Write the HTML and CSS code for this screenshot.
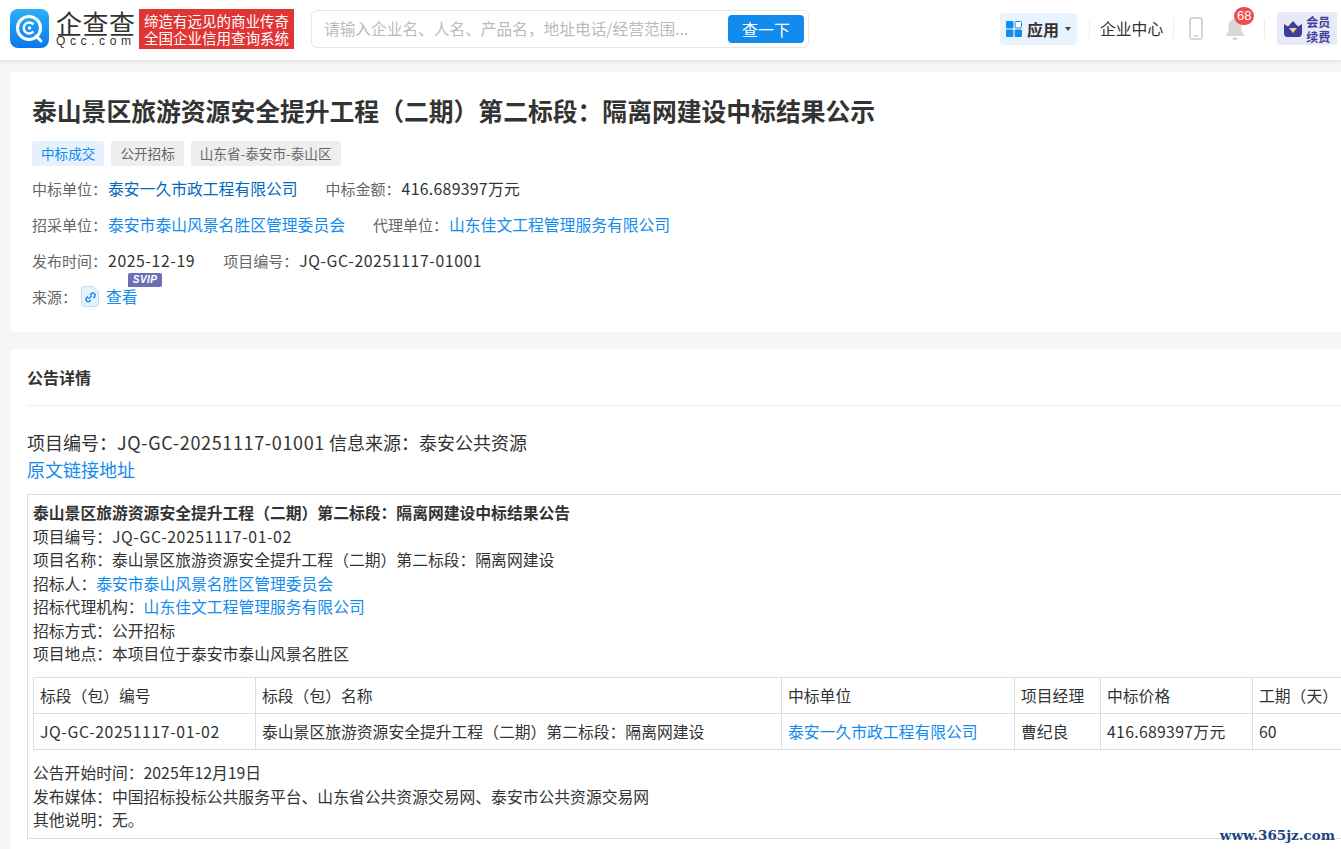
FILE: index.html
```html
<!DOCTYPE html>
<html lang="zh-CN">
<head>
<meta charset="utf-8">
<title>泰山景区旅游资源安全提升工程&#xFF08;二期&#xFF09;第二标段&#xFF1A;隔离网建设中标结果公示</title>
<link rel="stylesheet" href="styles.css">
</head>
<body>
<header class="topbar">
  <svg class="logo-mark" width="39" height="39" viewBox="0 0 39 39">
    <defs><linearGradient id="lg" x1="0" y1="0" x2="0" y2="1"><stop offset="0" stop-color="#2bb0f5"/><stop offset="1" stop-color="#0a78f0"/></linearGradient></defs>
    <rect width="39" height="39" rx="8" fill="url(#lg)"/>
    <circle cx="19" cy="19" r="11.5" fill="none" stroke="#fff" stroke-width="3"/>
    <path d="M23.5 15.5a5.5 5.5 0 1 0 0 7" fill="none" stroke="#fff" stroke-width="2.4"/>
    <circle cx="19.5" cy="19" r="1.8" fill="#fff"/>
    <path d="M26 27l5 5" stroke="#fff" stroke-width="3" stroke-linecap="round"/>
  </svg>
  <div class="logo-text">
    <div class="logo-cn">企查查</div>
    <div class="logo-en">Qcc.com</div>
  </div>
  <div class="slogan">缔造有远见的商业传奇<br>全国企业信用查询系统</div>
  <div class="search">
    <span class="search-hint">请输入企业名、人名、产品名&#xFF0C;地址电话/经营范围...</span>
    <span class="search-btn">查一下</span>
  </div>
  <nav class="topnav">
    <div class="apps">
      <svg width="16" height="16" viewBox="0 0 16 16"><rect width="7.4" height="7.4" rx="1" fill="#128bed"/><rect x="9.1" y=".5" width="6.4" height="6.4" rx="1" fill="#fff" stroke="#128bed"/><rect y="8.6" width="7.4" height="7.4" rx="1" fill="#128bed"/><rect x="8.6" y="8.6" width="7.4" height="7.4" rx="1" fill="#128bed"/></svg>
      <span class="apps-label">应用</span>
      <span class="caret"></span>
    </div>
    <span class="nav-sep sep-first"></span>
    <span class="nav-link">企业中心</span>
    <span class="nav-sep"></span>
    <svg class="phone" width="14" height="23" viewBox="0 0 14 23"><rect x="1" y="1" width="12" height="21" rx="2.5" fill="none" stroke="#d6d6d6" stroke-width="2"/><rect x="4.5" y="18" width="5" height="1.6" fill="#d6d6d6"/></svg>
    <div class="bell">
      <svg width="20" height="24" viewBox="0 0 20 24"><path d="M10 2c-4 0-6.500 3-6.500 7v5L1 18v1h18v-1l-2.500-4V9c0-4-2.500-7-6.500-7z" fill="#d8d8d8"/><rect x="7.5" y="20.5" width="5" height="2.5" rx="1.2" fill="#d8d8d8"/></svg>
      <span class="badge">68</span>
    </div>
    <span class="nav-sep sep-last"></span>
    <div class="vip">
      <svg width="18" height="16" viewBox="0 0 18 16"><path d="M0 3l4 2.500L9 0l5 5.500L18 3v9c0 2-1 4-3 4H3c-2 0-3-2-3-4z" fill="#3f3f99"/><path d="M5 7h8l-4 5z" fill="#f3cf8f"/></svg>
      <span class="vip-text">会员<br>续费</span>
    </div>
  </nav>
</header>

<main class="page">
  <section class="card summary">
    <h1 class="title">泰山景区旅游资源安全提升工程&#xFF08;二期&#xFF09;第二标段&#xFF1A;隔离网建设中标结果公示</h1>
    <div class="tags">
      <span class="tag tag-blue">中标成交</span>
      <span class="tag">公开招标</span>
      <span class="tag">山东省-泰安市-泰山区</span>
    </div>
    <div class="meta"><span class="lbl">中标单位&#xFF1A;</span><a class="deep">泰安一久市政工程有限公司</a><span class="lbl gap">中标金额&#xFF1A;</span><span class="val amount">416.689397万元</span></div>
    <div class="meta"><span class="lbl">招采单位&#xFF1A;</span><a>泰安市泰山风景名胜区管理委员会</a><span class="lbl gap">代理单位&#xFF1A;</span><a>山东佳文工程管理服务有限公司</a></div>
    <div class="meta"><span class="lbl">发布时间&#xFF1A;</span><span class="val code">2025-12-19</span><span class="lbl gap">项目编号&#xFF1A;</span><span class="val code">JQ-GC-20251117-01001</span></div>
    <div class="meta source">
      <span class="lbl">来源&#xFF1A;</span>
      <svg class="file" width="18" height="21" viewBox="0 0 18 21"><path d="M2.500.5H12L17.500 6v12a2.500 2.500 0 0 1-2.500 2.500H2.500A2 2 0 0 1 .5 18.500v-16a2 2 0 0 1 2-2z" fill="#e6f3fd" stroke="#bcdcf7"/><path d="M7.500 13l3.500-3.500M7 10.500L5.500 12a2.300 2.300 0 0 0 3.200 3.200L10 14M9 9L10.500 7.500a2.300 2.300 0 0 1 3.200 3.200L12.200 12" fill="none" stroke="#128bed" stroke-width="1.500"/></svg>
      <a class="view">查看<span class="svip">SVIP</span></a>
    </div>
  </section>

  <section class="card detail">
    <h2 class="detail-head">公告详情</h2>
    <div class="detail-body">
      <p class="lead">项目编号&#xFF1A;<span class="lead-code">JQ-GC-20251117-01001</span> 信息来源&#xFF1A;泰安公共资源<br><a>原文链接地址</a></p>
      <div class="notice">
        <strong>泰山景区旅游资源安全提升工程&#xFF08;二期&#xFF09;第二标段&#xFF1A;隔离网建设中标结果公告</strong><br>
        项目编号&#xFF1A;<span class="code">JQ-GC-20251117-01-02</span><br>
        项目名称&#xFF1A;泰山景区旅游资源安全提升工程&#xFF08;二期&#xFF09;第二标段&#xFF1A;隔离网建设<br>
        招标人&#xFF1A;<a>泰安市泰山风景名胜区管理委员会</a><br>
        招标代理机构&#xFF1A;<a>山东佳文工程管理服务有限公司</a><br>
        招标方式&#xFF1A;公开招标<br>
        项目地点&#xFF1A;本项目位于泰安市泰山风景名胜区
        <table class="bids">
          <colgroup><col class="c1"><col class="c2"><col class="c3"><col class="c4"><col class="c5"><col class="c6"></colgroup>
          <tr><td>标段&#xFF08;包&#xFF09;编号</td><td>标段&#xFF08;包&#xFF09;名称</td><td>中标单位</td><td>项目经理</td><td>中标价格</td><td>工期&#xFF08;天&#xFF09;</td></tr>
          <tr><td class="code">JQ-GC-20251117-01-02</td><td>泰山景区旅游资源安全提升工程&#xFF08;二期&#xFF09;第二标段&#xFF1A;隔离网建设</td><td><a>泰安一久市政工程有限公司</a></td><td>曹纪良</td><td class="amount">416.689397万元</td><td>60</td></tr>
        </table>
        公告开始时间&#xFF1A;2025年12月19日<br>
        发布媒体&#xFF1A;中国招标投标公共服务平台、山东省公共资源交易网、泰安市公共资源交易网<br>
        其他说明&#xFF1A;无。
      </div>
    </div>
  </section>
</main>
<div class="watermark">www.365jz.com</div>
</body>
</html>
```

FILE: styles.css
```css
* { box-sizing: border-box; }
html, body { margin: 0; padding: 0; height: 849px; overflow: hidden; }
body {
  position: relative;
  width: 1341px;
  background: #f6f6f6;
  color: #333;
  font-family: "Noto Sans CJK SC", "Open Sans", sans-serif;
  font-size: 14px;
}
a { color: #128bed; text-decoration: none; }
.code { letter-spacing: .6px; }
.amount { letter-spacing: .3px; }

.topbar {
  display: flex;
  align-items: center;
  height: 60px;
  padding-left: 10px;
  background: #fff;
  box-shadow: 0 1px 4px rgba(0,0,0,.12);
}
.logo-mark { flex: none; margin-top: -3px; }
.logo-text { width: 79px; margin-left: 7px; margin-top: -3px; }
.logo-cn {
  font-size: 26px; line-height: 25px; letter-spacing: .5px; color: #333; white-space: nowrap;
}
.logo-en {
  font-family: "Liberation Sans", sans-serif;
  font-size: 12px; line-height: 12px; letter-spacing: 4.6px; color: #333; white-space: nowrap;
  margin-top: 0;
}
.slogan {
  width: 155px; height: 40px; margin-left: 4px;
  margin-top: -3px;
  background: #e03535; color: #fff;
  font-size: 14.5px; line-height: 17px; text-align: center; white-space: nowrap;
  padding-top: 3px;
}
.search {
  display: flex; align-items: center; justify-content: space-between;
  width: 498px; height: 38px; margin-left: 17px; margin-top: -3px;
  padding: 0 4px 0 12px;
  border: 1px solid #e6e6e6; border-radius: 6px; background: #fff;
}
.search-hint { font-size: 15.7px; color: #bbb; white-space: nowrap; }
.search-btn {
  flex: none;
  width: 76px; height: 28px; border-radius: 4px;
  background: #128bed; color: #fff; font-size: 16px; line-height: 28px; text-align: center;
}
.topnav { display: flex; align-items: center; margin-left: 191px; margin-top: -3px; }
.apps {
  display: flex; align-items: center;
  width: 77px; height: 32px; padding-left: 6px;
  border-radius: 4px; background: #e9f3fd;
}
.apps-label { margin-left: 5px; font-size: 16px; font-weight: 700; color: #333; }
.caret {
  margin-left: 6px; border-left: 3.5px solid transparent; border-right: 3.5px solid transparent;
  border-top: 4px solid #444;
}
.nav-sep { width: 1px; height: 20px; background: #eee; flex: none; }
.sep-first { margin-left: 12px; }
.nav-link { margin: 0 10px; font-size: 15.8px; color: #333; white-space: nowrap; }
.phone { margin-left: 15px; }
.bell { position: relative; margin-left: 22px; height: 24px; }
.bell svg { display: block; }
.badge {
  position: absolute; left: 9px; top: -10px;
  min-width: 20px; height: 18px; border-radius: 9px;
  background: #f04c4c; color: #fff; font-size: 13px; line-height: 18px; text-align: center;
  font-family: "Liberation Sans", sans-serif;
}
.sep-last { margin-left: 19px; }
.vip {
  display: flex; align-items: center; gap: 4px;
  width: 60px; height: 33px; margin-left: 12px; padding-left: 7px;
  border-radius: 3px; background: #e8e9f8;
}
.vip-text { font-size: 12px; line-height: 15px; font-weight: 700; color: #3f3f99; }

.page { padding: 12px 0 0 10px; width: 1500px; }
.card { background: #fff; border-radius: 4px; }
.summary { height: 260px; padding: 21px 0 0 22px; margin-bottom: 17px; }
.title { margin: 0; font-size: 24.8px; line-height: 34px; font-weight: 700; color: #333; white-space: nowrap; }
.tags { display: flex; gap: 7px; margin-top: 14px; }
.tag {
  height: 25px; padding: 0 9px; border-radius: 2px;
  background: #eee; color: #666; font-size: 13.6px; line-height: 25px; white-space: nowrap;
}
.tag-blue { background: #e5f2fd; color: #128bed; }
.meta { display: flex; height: 36px; align-items: center; font-size: 15.8px; white-space: nowrap; }
.tags + .meta { margin-top: 4px; }
.lbl { color: #666; font-size: 15px; margin-right: 1px; }
.gap { margin-left: 28px; }
.val { color: #333; }
.deep { color: #0069bf; }
.source .lbl { margin-right: 4px; }
.file { margin-right: 7px; }
.view { position: relative; }
.svip {
  position: absolute; left: 22px; top: -12px;
  width: 34px; height: 14px; border-radius: 2px 2px 2px 0;
  background: #6c6fb4; color: #fff; letter-spacing: .4px;
  font: italic 700 10px/14px "Liberation Sans", sans-serif; text-align: center;
}

.detail { height: 600px; padding: 0 0 0 17px; }
.detail-head {
  margin: 0; height: 57px; border-bottom: 1px solid #eee;
  font-size: 16px; font-weight: 700; line-height: 56px; color: #333;
}
.detail-body { padding-top: 23px; }
.lead { margin: 0 0 11px; font-size: 18px; line-height: 27px; color: #333; }
.lead-code { letter-spacing: .65px; }
.notice {
  width: 1500px; padding: 6px 5px 6px; border: 1px solid #ddd;
  font-size: 15.8px; line-height: 23.5px; color: #333;
}
.notice strong { font-weight: 700; }
.bids { width: 1400px; margin: 11px 0 11.5px; border-collapse: collapse; table-layout: fixed; }
.bids td {
  height: 36px; padding: 1px 6px 0; border: 1px solid #ddd;
  font-size: 15.8px; line-height: 24px; white-space: nowrap; overflow: hidden;
}
.c1 { width: 222px; }
.c2 { width: 526px; }
.c3 { width: 233px; }
.c4 { width: 86px; }
.c5 { width: 152px; }
.c6 { width: 181px; }

.watermark {
  position: absolute; right: 6px; bottom: 6px;
  font-family: "DejaVu Serif", serif; font-size: 13.5px; font-weight: 700; color: #1b4585;
}
```
